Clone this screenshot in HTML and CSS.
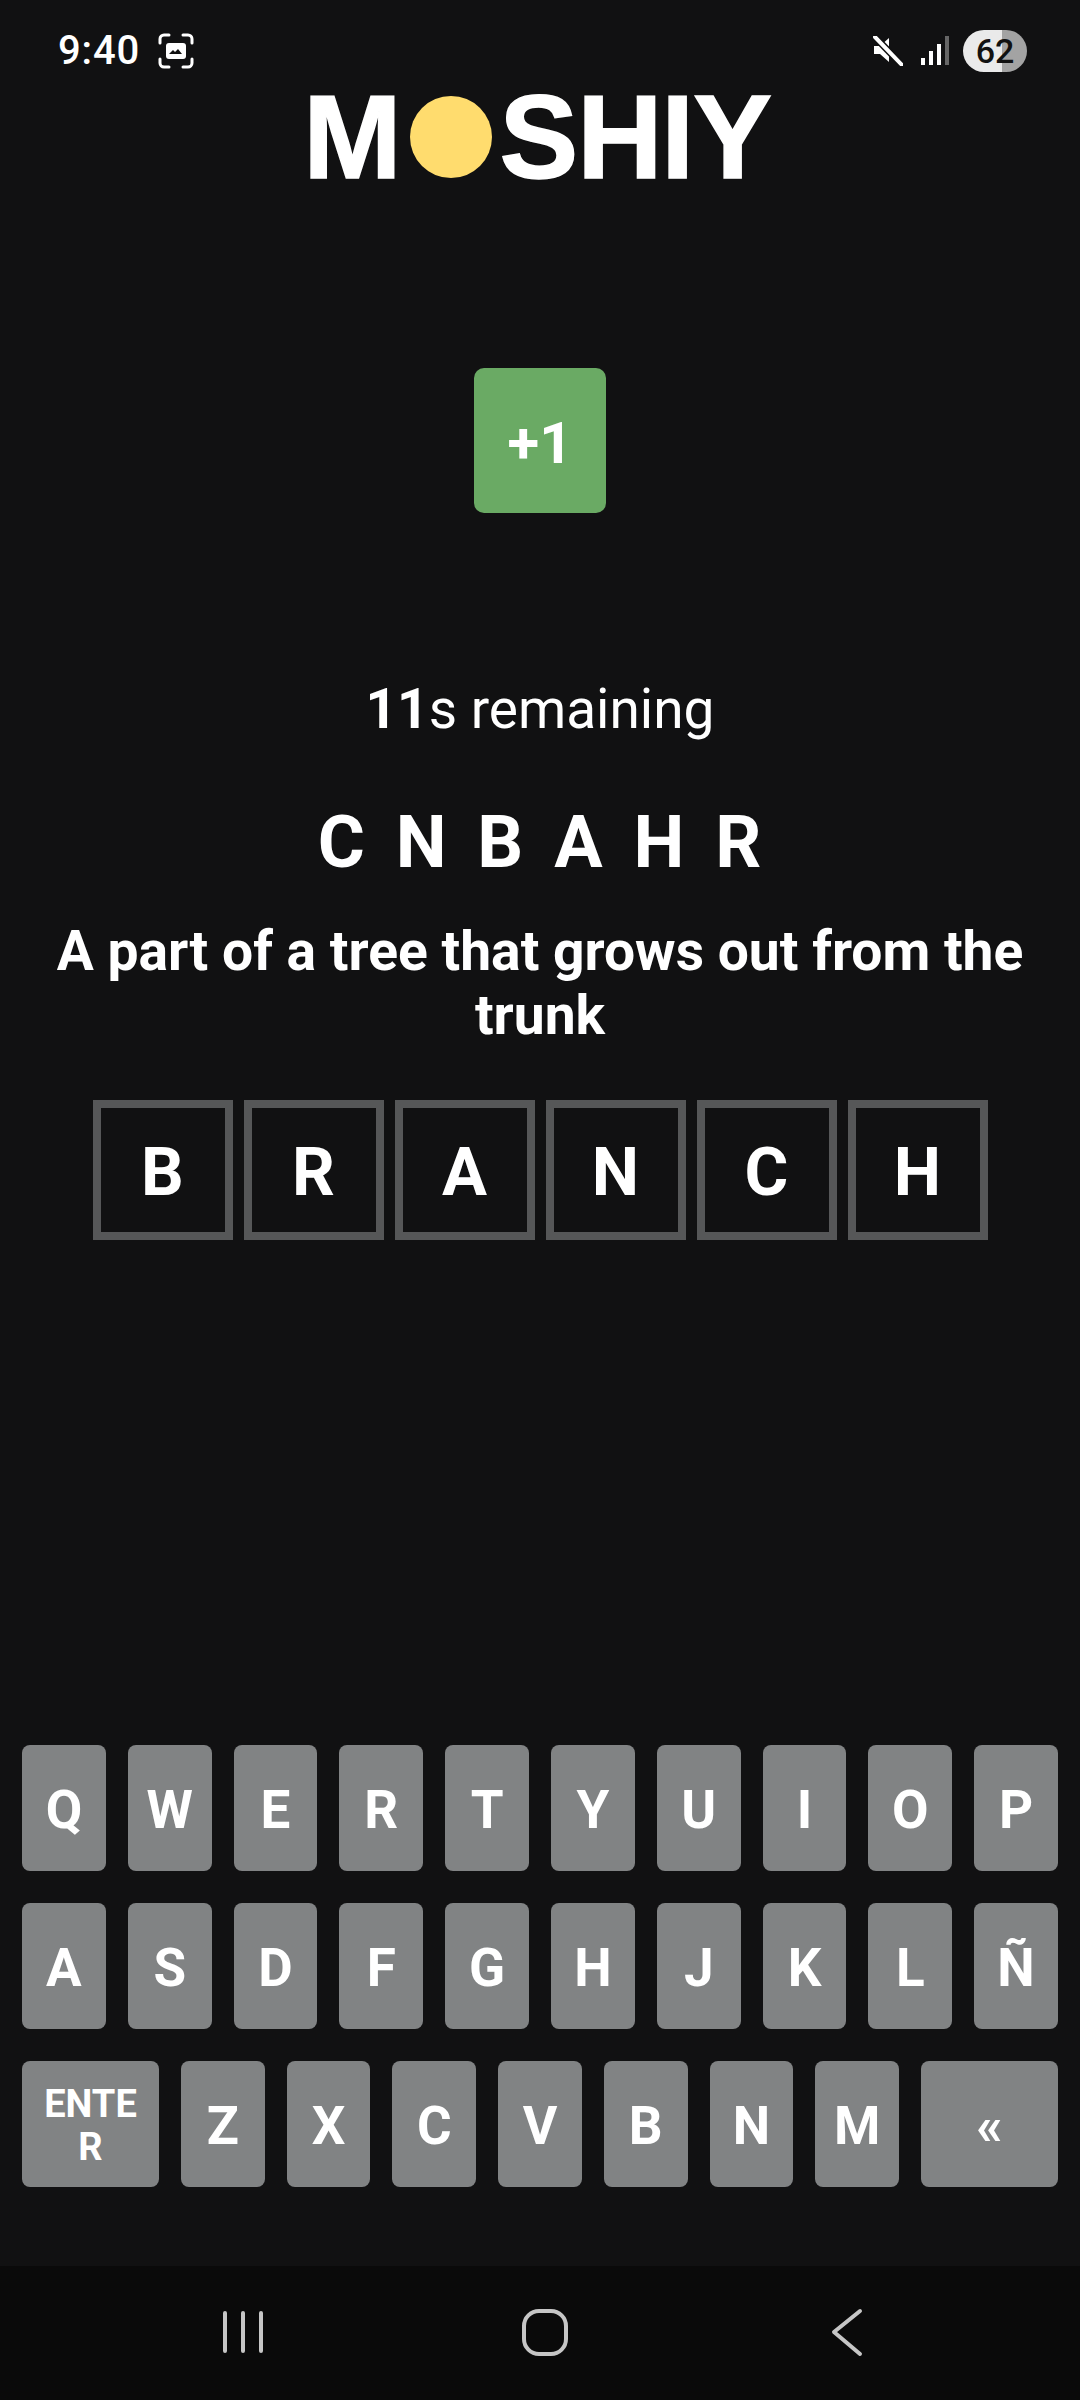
FILE: index.html
```html
<!DOCTYPE html>
<html lang="en">
<head>
    <meta charset="UTF-8">
    <meta name="viewport" content="width=device-width, initial-scale=1.0">
    <title>Moshiy</title>
    <link rel="stylesheet" href="styles.css">
</head>
<body>
    <div class="status-bar">
        <div class="status-left">
            <span class="clock">9:40</span>
            <svg class="shot-icon" width="36" height="36" viewBox="0 0 36 36" fill="none">
                <path d="M2 10V6a4 4 0 0 1 4-4h5M25 2h5a4 4 0 0 1 4 4v4M34 26v4a4 4 0 0 1-4 4h-5M11 34H6a4 4 0 0 1-4-4v-4" stroke="#fff" stroke-width="3" stroke-linecap="round"/>
                <rect x="8" y="10" width="20" height="16" rx="3" fill="#fff"/>
                <path d="M11 21l4-4 2 2 3-3 4 5z" fill="#111"/>
            </svg>
        </div>
        <div class="status-right">
            <svg width="30" height="30" viewBox="0 0 30 30">
                <path d="M1 10h6l9-8v24l-9-8H1z" fill="#fff"/>
                <path d="M2 1l27 28" stroke="#111" stroke-width="7"/>
                <path d="M2 1l27 28" stroke="#fff" stroke-width="4" stroke-linecap="round"/>
            </svg>
            <svg class="signal-icon" width="28" height="30" viewBox="0 0 28 30">
                <rect x="0" y="22" width="4" height="7" fill="#fff"/>
                <rect x="8" y="15" width="4" height="14" fill="#fff"/>
                <rect x="16" y="8" width="4" height="21" fill="#fff"/>
                <rect x="24" y="0" width="4" height="29" fill="#666"/>
            </svg>
            <div class="battery">62</div>
        </div>
    </div>

    <h1 class="logo">M<span class="logo-sun"></span>SHIY</h1>

    <div class="score">+1</div>

    <p class="timer"><strong>11</strong>s remaining</p>
    <p class="scramble">C N B A H R</p>
    <p class="clue">A part of a tree that grows out from the trunk</p>

    <div class="tiles">
        <div class="tile">B</div>
        <div class="tile">R</div>
        <div class="tile">A</div>
        <div class="tile">N</div>
        <div class="tile">C</div>
        <div class="tile">H</div>
    </div>

    <div class="keyboard">
        <div class="key-row">
            <button class="key">Q</button>
            <button class="key">W</button>
            <button class="key">E</button>
            <button class="key">R</button>
            <button class="key">T</button>
            <button class="key">Y</button>
            <button class="key">U</button>
            <button class="key">I</button>
            <button class="key">O</button>
            <button class="key">P</button>
        </div>
        <div class="key-row">
            <button class="key">A</button>
            <button class="key">S</button>
            <button class="key">D</button>
            <button class="key">F</button>
            <button class="key">G</button>
            <button class="key">H</button>
            <button class="key">J</button>
            <button class="key">K</button>
            <button class="key">L</button>
            <button class="key">Ñ</button>
        </div>
        <div class="key-row">
            <button class="key key-wide key-enter">ENTER</button>
            <button class="key">Z</button>
            <button class="key">X</button>
            <button class="key">C</button>
            <button class="key">V</button>
            <button class="key">B</button>
            <button class="key">N</button>
            <button class="key">M</button>
            <button class="key key-wide key-back">«</button>
        </div>
    </div>

    <div class="nav-bar">
        <svg width="60" height="50" viewBox="0 0 60 50" fill="none" stroke="#c6c6c6" stroke-width="4" stroke-linecap="round">
            <path d="M12 5v38M30 5v38M48 5v38"/>
        </svg>
        <svg width="60" height="50" viewBox="0 0 60 50" fill="none" stroke="#c6c6c6" stroke-width="4">
            <rect x="9" y="3" width="42" height="43" rx="15"/>
        </svg>
        <svg width="60" height="50" viewBox="0 0 60 50" fill="none" stroke="#c6c6c6" stroke-width="4" stroke-linecap="round" stroke-linejoin="round">
            <path d="M43 3L17 24l26 22"/>
        </svg>
    </div>
</body>
</html>
```

FILE: styles.css
```css
body {
    width: 1080px;
    height: 2400px;
    margin: 0;
    background-color: #111112;
    color: white;
    font-family: Roboto, 'Liberation Sans', sans-serif;
    display: flex;
    flex-direction: column;
    align-items: center;
    overflow: hidden;
}

.status-bar {
    width: 100%;
    height: 84px;
    box-sizing: border-box;
    padding: 17px 53px 0 58px;
    display: flex;
    justify-content: space-between;
    align-items: center;
}

.status-left, .status-right {
    display: flex;
    align-items: center;
}

.clock {
    font-size: 40px;
    font-weight: 500;
    letter-spacing: 0.8px;
}

.shot-icon {
    margin-left: 18px;
}

.signal-icon {
    margin-left: 18px;
}

.battery {
    width: 64px;
    height: 42px;
    margin-left: 14px;
    border-radius: 21px;
    background: linear-gradient(to right, #eaeaea 61%, #a3a3a3 61%);
    color: #111;
    font-size: 34px;
    font-weight: 500;
    line-height: 42px;
    text-align: center;
}

.logo {
    margin: -3px 6px 0 0;
    height: 112px;
    display: flex;
    align-items: center;
    font-family: 'Liberation Sans', Arial, sans-serif;
    font-size: 118px;
    font-weight: bold;
    letter-spacing: -1px;
    line-height: 112px;
    -webkit-text-stroke: 1.5px white;
}

.logo-sun {
    width: 82px;
    height: 82px;
    margin: 0 7px 0 10px;
    border-radius: 50%;
    background-color: #ffdc6e;
}

.score {
    width: 132px;
    height: 145px;
    margin-top: 175px;
    padding-top: 4px;
    box-sizing: border-box;
    border-radius: 10px;
    background-color: #6aaa64;
    font-size: 58px;
    font-weight: bold;
    display: flex;
    align-items: center;
    justify-content: center;
}

.timer {
    margin: 161px 0 0;
    font-size: 55px;
    line-height: 70px;
}

.timer strong {
    font-weight: bold;
}

.scramble {
    margin: 57px 0 0 2px;
    font-size: 72px;
    font-weight: bold;
    line-height: 84px;
    letter-spacing: 3px;
    word-spacing: 7px;
}

.clue {
    width: 1000px;
    margin: 34px 0 0;
    font-size: 55.2px;
    font-weight: bold;
    line-height: 64px;
    text-align: center;
}

.tiles {
    display: flex;
    gap: 11px;
    margin-top: 53px;
}

.tile {
    width: 140px;
    height: 140px;
    box-sizing: border-box;
    padding-top: 3px;
    border: 8px solid #565758;
    font-size: 67px;
    font-weight: bold;
    display: flex;
    align-items: center;
    justify-content: center;
}

.keyboard {
    width: 100%;
    box-sizing: border-box;
    margin-top: auto;
    padding: 0 22px 79px;
    display: flex;
    flex-direction: column;
    gap: 32px;
}

.key-row {
    display: flex;
    gap: 22px;
}

.key {
    flex: 1;
    height: 126px;
    padding: 3px 0 0;
    border: none;
    border-radius: 8px;
    background-color: #818384;
    color: white;
    font-family: Roboto, 'Liberation Sans', sans-serif;
    font-size: 53px;
    font-weight: bold;
}

.key-wide {
    flex: 0 0 137px;
}

.key-enter {
    padding: 3px 20px 0;
    font-size: 38px;
    line-height: 43px;
    word-break: break-all;
}

.nav-bar {
    width: 100%;
    height: 134px;
    box-sizing: border-box;
    flex-shrink: 0;
    padding: 0 0 0 213px;
    background-color: #0a0a0a;
    display: flex;
    align-items: center;
    gap: 242px;
}
```
